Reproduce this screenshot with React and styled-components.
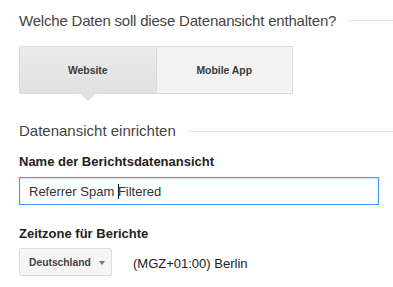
import React from "react";
import styled, { createGlobalStyle } from "styled-components";

const Global = createGlobalStyle`
  html, body { margin: 0; padding: 0; background: #fff; }
  body { font-family: Arial, "Liberation Sans", sans-serif; }
`;

const Page = styled.div`
  width: 393px;
  height: 287px;
  box-sizing: border-box;
  padding: 12px 0 0 19px;
  overflow: hidden;
  display: flex;
  flex-direction: column;
`;

const SectionHeading = styled.div`
  display: flex;
  align-items: center;
  gap: 12px;
  font-size: 15px;
  line-height: 18px;
  color: #444;
  letter-spacing: ${(p) => p.$tight || "0"};
  margin-top: ${(p) => p.$top || 0}px;
  white-space: nowrap;
  &::after {
    content: "";
    flex: 1;
    height: 1px;
    background: #e3e3e3;
    margin-top: ${(p) => p.$lineOffset || 0}px;
  }
`;

const Tabs = styled.div`
  display: flex;
  width: 274px;
  height: 48px;
  margin-top: 16px;
`;

const Tab = styled.div`
  position: relative;
  flex: 1;
  display: flex;
  align-items: center;
  justify-content: center;
  box-sizing: border-box;
  border: 1px solid #d9d9d9;
  border-left-width: ${(p) => (p.$first ? 1 : 0)}px;
  border-radius: ${(p) => (p.$first ? "2px 0 0 2px" : "0 2px 2px 0")};
  background: ${(p) =>
    p.$active ? "linear-gradient(#ebebeb, #e1e1e1)" : "#f3f3f3"};
  font-size: 10.4px;
  font-weight: bold;
  color: #3a3a3a;
  ${(p) =>
    p.$active &&
    `
    &::after {
      content: "";
      position: absolute;
      left: 50%;
      bottom: -8px;
      margin-left: -9px;
      border-left: 9px solid transparent;
      border-right: 9px solid transparent;
      border-top: 8px solid #e2e2e2;
    }
  `}
`;

const FieldLabel = styled.div`
  font-size: 13px;
  line-height: 16px;
  font-weight: bold;
  color: #222;
  margin-top: ${(p) => p.$top}px;
`;

const TextField = styled.div`
  margin-top: 7px;
  width: 360px;
  height: 28px;
  box-sizing: border-box;
  border: 1px solid #4d90fe;
  box-shadow: inset 0 1px 2px rgba(0, 0, 0, 0.12);
  display: flex;
  align-items: center;
  padding-left: 9px;
  font-size: 13px;
  color: #333;
  white-space: pre;
`;

const Caret = styled.span`
  display: inline-block;
  width: 1px;
  height: 15px;
  background: #111;
  margin-right: -1px;
`;

const Row = styled.div`
  display: flex;
  align-items: center;
  gap: 21px;
  margin-top: 6px;
`;

const Dropdown = styled.div`
  height: 28px;
  width: 93px;
  box-sizing: border-box;
  border: 1px solid #dcdcdc;
  border-radius: 2px;
  background: #f5f5f5;
  display: flex;
  align-items: center;
  padding-left: 9px;
  gap: 8px;
  font-size: 10.3px;
  font-weight: bold;
  color: #444;
`;

const Arrow = styled.span`
  width: 0;
  height: 0;
  border-left: 3.5px solid transparent;
  border-right: 3.5px solid transparent;
  border-top: 4px solid #777;
  margin-top: 1px;
`;

const ZoneText = styled.span`
  font-size: 13px;
  color: #222;
  margin-top: 3px;
`;

export default function App() {
  return (
    <>
      <Global />
      <Page>
        <SectionHeading $tight="-0.2px" $lineOffset={-2}>
          Welche Daten soll diese Datenansicht enthalten?
        </SectionHeading>
        <Tabs>
          <Tab $first $active>Website</Tab>
          <Tab>Mobile App</Tab>
        </Tabs>
        <SectionHeading $top={28} $lineOffset={0}>
          Datenansicht einrichten
        </SectionHeading>
        <FieldLabel $top={14}>Name der Berichtsdatenansicht</FieldLabel>
        <TextField>
          Referrer Spam <Caret />Filtered
        </TextField>
        <FieldLabel $top={21}>Zeitzone für Berichte</FieldLabel>
        <Row>
          <Dropdown>
            Deutschland
            <Arrow />
          </Dropdown>
          <ZoneText>(MGZ+01:00) Berlin</ZoneText>
        </Row>
      </Page>
    </>
  );
}
